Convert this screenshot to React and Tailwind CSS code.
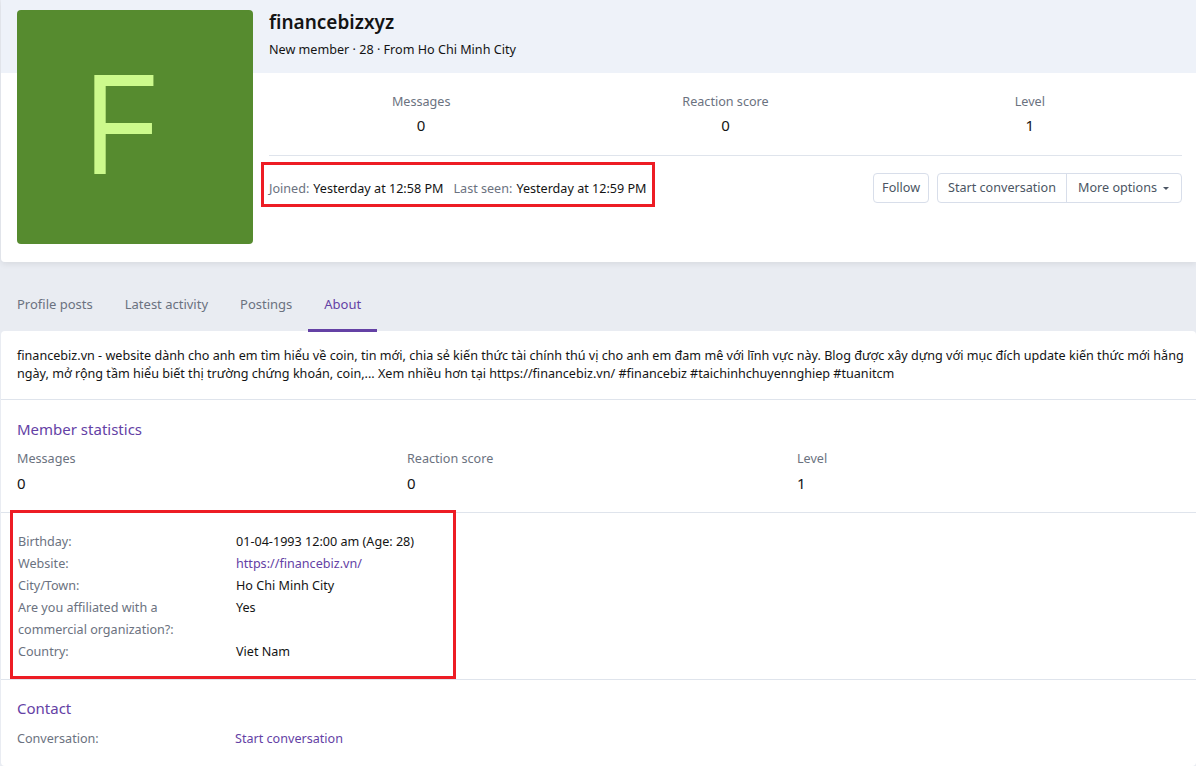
import React from "react";

const stats = [
  { label: "Messages", value: "0" },
  { label: "Reaction score", value: "0" },
  { label: "Level", value: "1" },
];

const about = [
  { label: "Birthday:", value: "01-04-1993 12:00 am (Age: 28)" },
  { label: "Website:", value: "https://financebiz.vn/", link: true },
  { label: "City/Town:", value: "Ho Chi Minh City" },
  { label: "Are you affiliated with a commercial organization?:", value: "Yes" },
  { label: "Country:", value: "Viet Nam" },
];

const tabs = ["Profile posts", "Latest activity", "Postings", "About"];

export default function App() {
  return (
    <div
      className="min-h-[766px] bg-[#e9ecf2] text-[12.6px] text-[#141414]"
      style={{ fontFamily: '"Noto Sans", "Open Sans", sans-serif' }}
    >
      {/* profile header card */}
      <div className="ml-px rounded-bl-[4px] shadow-[0_2px_6px_rgba(0,0,0,0.08)] bg-[linear-gradient(to_bottom,#eef2f9_73px,#ffffff_73px)]">
        <div className="flex">
          <div className="pl-4 pt-[10px] pb-[18px]">
            <div className="w-[236px] h-[234px] bg-[#568b2f] rounded-[4px] flex items-center justify-center pr-[28px]">
              <span
                className="inline-block scale-x-[0.85] text-[#ccfa8c] text-[142px] leading-none -mt-[4px]"
                style={{ fontFamily: '"Liberation Sans", Arial, sans-serif' }}
              >
                F
              </span>
            </div>
          </div>
          <div className="flex-1 flex flex-col">
            <div className="h-[73px] pl-4 pt-[8px]">
              <h1 className="text-[19px] font-semibold leading-[28px] text-[#141414]">financebizxyz</h1>
              <div className="mt-[5px]">New member · 28 · From Ho Chi Minh City</div>
            </div>
            <div className="pl-4 pr-[14px]">
              <div className="grid grid-cols-3 border-b border-[#dfe4ec] pt-[19px] pb-[19px]">
                {stats.map((s) => (
                  <div key={s.label} className="text-center">
                    <div className="text-[#6b7280] leading-[20px]">{s.label}</div>
                    <div className="text-[15px] leading-[22px] mt-[2px]">{s.value}</div>
                  </div>
                ))}
              </div>
              <div className="flex items-start justify-between pt-[6px]">
                <div className="-ml-[8px] border-[3px] border-[#ed1c24] px-[5px] pt-[9px] h-[45px] flex items-center">
                  <span className="text-[#6b7280]">Joined:</span>
                  <span className="ml-[4px]">Yesterday at 12:58 PM</span>
                  <span className="ml-[10px] text-[#6b7280]">Last seen:</span>
                  <span className="ml-[4px]">Yesterday at 12:59 PM</span>
                </div>
                <div className="flex gap-2 mt-[11px] text-[#4b5563]">
                  <button className="h-[30px] px-[8px] border border-[#d8deea] rounded-[4px] bg-white">Follow</button>
                  <div className="flex h-[30px] border border-[#d8deea] rounded-[4px] bg-white">
                    <button className="px-[10px] border-r border-[#d8deea]">Start conversation</button>
                    <button className="pl-[11px] pr-[12px] flex items-center gap-[6px]">
                      More options
                      <span className="w-0 h-0 border-l-[3px] border-r-[3px] border-t-[3px] border-l-transparent border-r-transparent border-t-[#4b5563]"></span>
                    </button>
                  </div>
                </div>
              </div>
            </div>
          </div>
        </div>
      </div>

      {/* tabs */}
      <div className="flex pl-px pt-[25px] text-[13px] text-[#6b7280]">
        {tabs.map((t) => (
          <div
            key={t}
            className={
              t === "About"
                ? "px-4 pt-[8px] pb-[14px] border-b-[3px] border-[#6441a5] text-[#6441a5]"
                : "px-4 pt-[8px] pb-[14px] border-b-[3px] border-transparent"
            }
          >
            {t}
          </div>
        ))}
      </div>

      {/* about card */}
      <div className="ml-px -mt-px bg-white rounded-[4px]">
        <div className="pl-4 pr-[4px] pt-[16px] pb-[16px] border-b border-[#dfe4ec] leading-[18px]">
          financebiz.vn - website dành cho anh em tìm hiểu về coin, tin mới, chia sẻ kiến thức tài chính thú vị cho anh em đam mê với lĩnh vực này. Blog được xây dựng với mục đích update kiến thức mới hằng ngày, mở rộng tầm hiểu biết thị trường chứng khoán, coin,... Xem nhiều hơn tại https://financebiz.vn/ #financebiz #taichinhchuyennghiep #tuanitcm
        </div>

        <div className="pl-4 pr-[9px] pt-[19px] pb-[18px] border-b border-[#dfe4ec]">
          <h3 className="text-[15px] text-[#6441a5] leading-[20px]">Member statistics</h3>
          <div className="grid grid-cols-3 mt-[10px]">
            {stats.map((s) => (
              <div key={s.label}>
                <div className="text-[#6b7280] leading-[20px]">{s.label}</div>
                <div className="text-[15px] leading-[22px] mt-[3px]">{s.value}</div>
              </div>
            ))}
          </div>
        </div>

        <div className="px-[9px] border-b border-[#dfe4ec]">
          <div className="w-[446px] -mt-[3px] border-[3px] border-[#ed1c24] pl-[5px] pt-[18px] pb-[13px]">
            {about.map((r) => (
              <div key={r.label} className="flex leading-[22px]">
                <div className="w-[200px] mr-[18px] text-[#6b7280]">{r.label}</div>
                <div className={r.link ? "text-[#6441a5]" : ""}>{r.value}</div>
              </div>
            ))}
          </div>
        </div>

        <div className="px-4 pt-[18px] pb-[16px]">
          <h3 className="text-[15px] text-[#6441a5] leading-[20px]">Contact</h3>
          <div className="flex mt-[10px] leading-[22px]">
            <div className="w-[218px] text-[#6b7280]">Conversation:</div>
            <div className="text-[#6441a5]">Start conversation</div>
          </div>
        </div>
      </div>
    </div>
  );
}
